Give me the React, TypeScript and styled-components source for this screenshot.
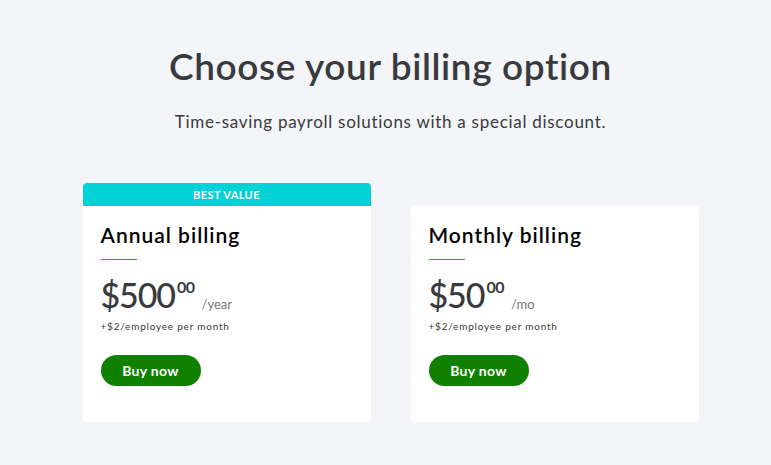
import React from "react";
import styled, { createGlobalStyle } from "styled-components";

const Global = createGlobalStyle`
  html, body { margin: 0; padding: 0; background: #f4f5f8; }
  body { font-family: "Lato", "Noto Sans", sans-serif; color: #393a3d; }
  * { box-sizing: border-box; }
`;

const Page = styled.div`
  width: 771px;
  min-height: 465px;
  padding: 44px 0 0 10px;
  display: flex;
  flex-direction: column;
  align-items: center;
`;

const Title = styled.h1`
  margin: 0;
  font-size: 37px;
  line-height: 44px;
  font-weight: 600;
  color: #393a3d;
  letter-spacing: 0.6px;
`;

const Subtitle = styled.p`
  margin: 22px 0 0;
  font-size: 17px;
  line-height: 24px;
  color: #393a3d;
  letter-spacing: 0.72px;
`;

const Cards = styled.div`
  margin-top: 49px;
  display: flex;
  gap: 40px;
  align-items: flex-end;
`;

const CardWrap = styled.div`
  width: 288px;
  display: flex;
  flex-direction: column;
`;

const Badge = styled.div`
  height: 23px;
  background: #00d2d6;
  border-radius: 4px 4px 0 0;
  color: #ffffff;
  font-size: 11px;
  font-weight: 700;
  letter-spacing: 0.4px;
  display: flex;
  align-items: center;
  justify-content: center;
`;

const Card = styled.div<{ $flatTop?: boolean }>`
  height: 216px;
  background: #ffffff;
  border-radius: ${(p) => (p.$flatTop ? "0 0 4px 4px" : "4px")};
  padding: 16px 18px 0;
  display: flex;
  flex-direction: column;
  align-items: flex-start;
`;

const CardTitle = styled.h2`
  margin: 0;
  font-size: 21px;
  line-height: 26px;
  font-weight: 600;
  color: #000000;
  letter-spacing: 1px;
`;

const Rule = styled.div`
  width: 36px;
  height: 1px;
  background: #2ca01c;
  margin-top: 11px;
  flex-shrink: 0;
`;

const PriceRow = styled.div`
  margin-top: 17px;
  display: flex;
  align-items: flex-end;
  line-height: 1;
`;

const Amount = styled.span`
  font-size: 34px;
  font-weight: 500;
  color: #393a3d;
  line-height: 36px;
  letter-spacing: -1.1px;
`;

const Cents = styled.sup`
  font-size: 16px;
  font-weight: 700;
  color: #393a3d;
  align-self: flex-start;
  line-height: 16px;
  margin-top: 2px;
  margin-left: 2px;
  letter-spacing: -0.5px;
`;

const Period = styled.span`
  font-size: 13px;
  color: #75777c;
  margin-left: 7px;
  margin-bottom: 2px;
`;

const Note = styled.div`
  margin-top: 7px;
  font-size: 10px;
  color: #393a3d;
  letter-spacing: 0.78px;
`;

const Button = styled.button`
  margin-top: 23px;
  width: 100px;
  height: 31px;
  border: none;
  border-radius: 16px;
  background: #108000;
  color: #ffffff;
  font-family: inherit;
  font-size: 14px;
  font-weight: 700;
  letter-spacing: 0.3px;
  cursor: pointer;
`;

type Plan = {
  title: string;
  amount: string;
  period: string;
  badge?: string;
};

const plans: Plan[] = [
  { title: "Annual billing", amount: "$500", period: "/year", badge: "BEST VALUE" },
  { title: "Monthly billing", amount: "$50", period: "/mo" },
];

export default function App() {
  return (
    <>
      <Global />
      <Page>
        <Title>Choose your billing option</Title>
        <Subtitle>Time-saving payroll solutions with a special discount.</Subtitle>
        <Cards>
          {plans.map((p) => (
            <CardWrap key={p.title}>
              {p.badge && <Badge>{p.badge}</Badge>}
              <Card $flatTop={!!p.badge}>
                <CardTitle>{p.title}</CardTitle>
                <Rule />
                <PriceRow>
                  <Amount>{p.amount}</Amount>
                  <Cents>00</Cents>
                  <Period>{p.period}</Period>
                </PriceRow>
                <Note>+$2/employee per month</Note>
                <Button>Buy now</Button>
              </Card>
            </CardWrap>
          ))}
        </Cards>
      </Page>
    </>
  );
}
